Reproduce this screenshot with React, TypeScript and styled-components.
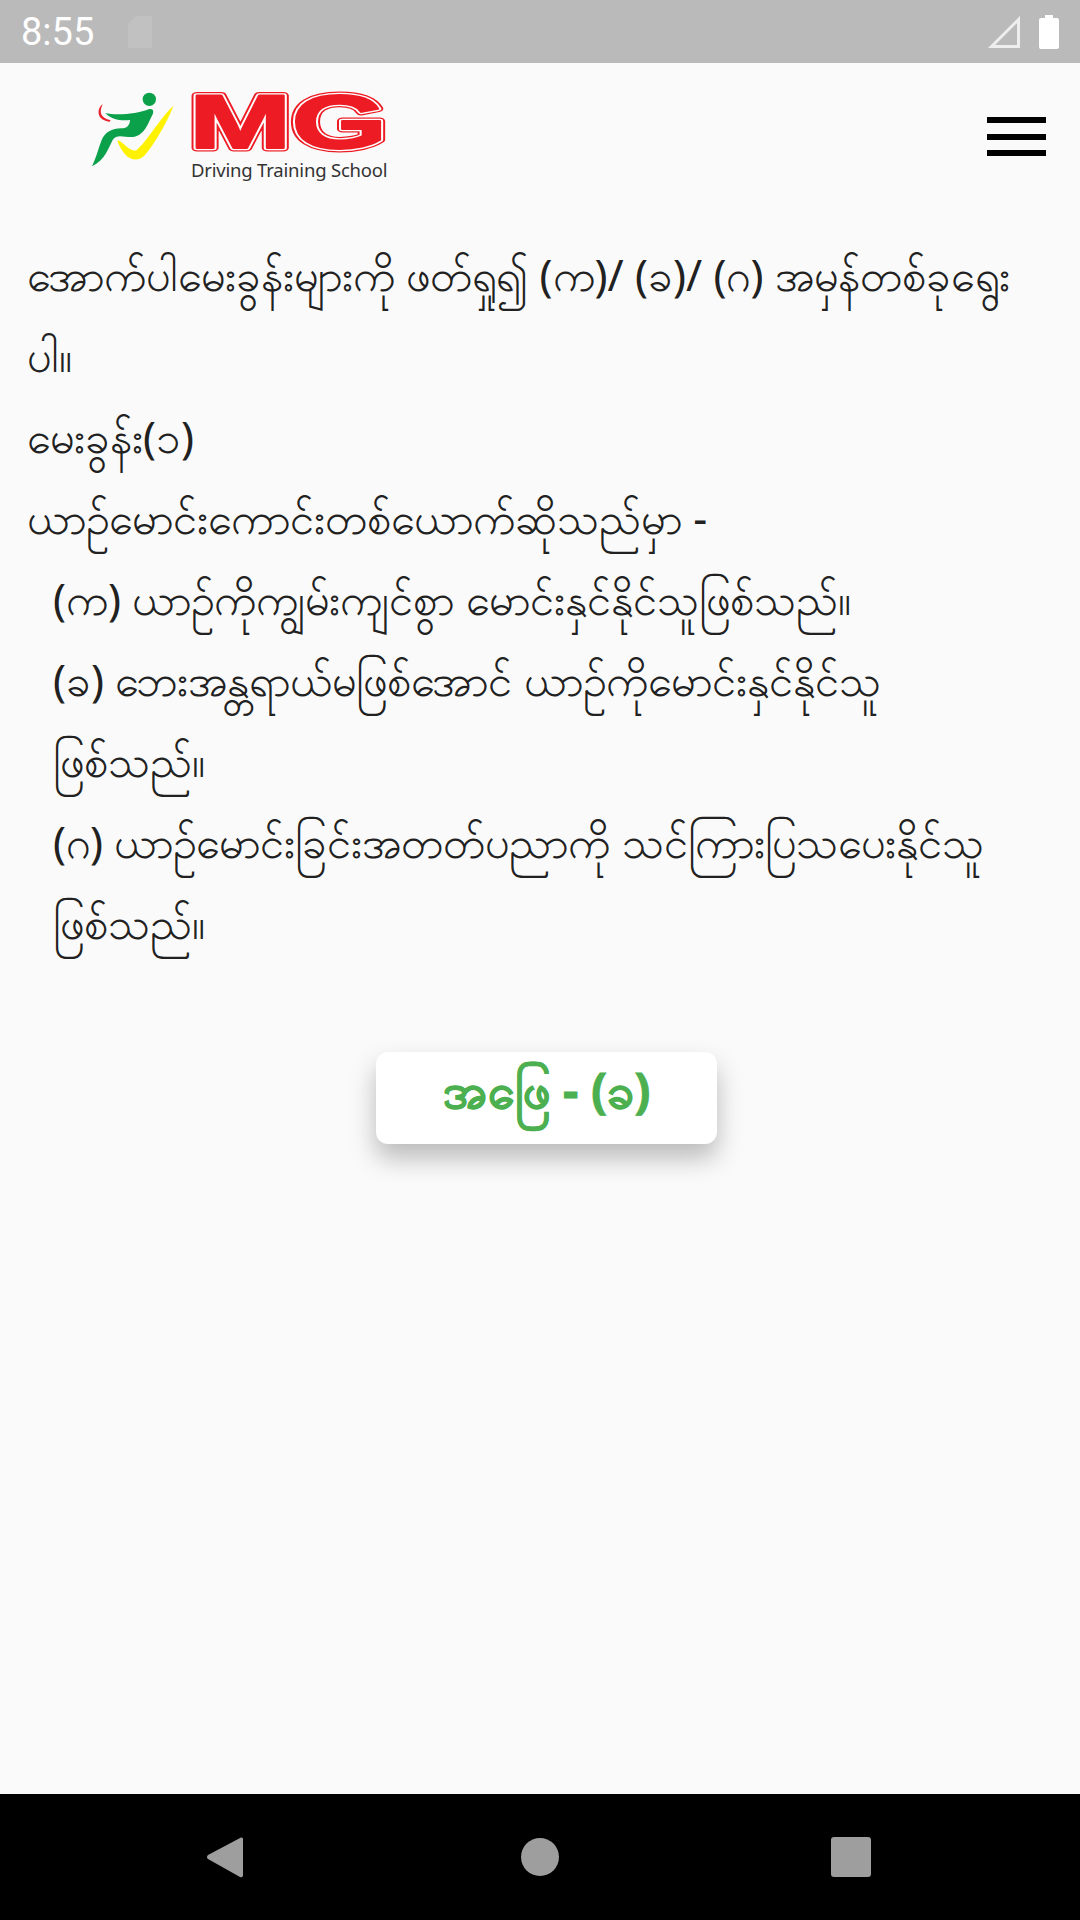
import styled, { createGlobalStyle } from "styled-components";

const Global = createGlobalStyle`
  html, body { margin: 0; padding: 0; background: #fafafa; }
`;

const Screen = styled.div`
  width: 1080px;
  height: 1920px;
  display: flex;
  flex-direction: column;
  background: #fafafa;
  overflow: hidden;
  font-family: "Noto Sans", sans-serif;
`;

const StatusBar = styled.div`
  height: 63px;
  flex-shrink: 0;
  background: #bababa;
  display: flex;
  align-items: center;
  padding: 0 21px;
  color: #fff;
`;

const Clock = styled.span`
  font: 400 38px Roboto, sans-serif;
  width: 107px;
`;

const StatusRight = styled.div`
  margin-left: auto;
  display: flex;
  align-items: center;
  gap: 19px;
`;

const Header = styled.header`
  height: 157px;
  flex-shrink: 0;
  display: flex;
  align-items: flex-start;
  justify-content: space-between;
  padding: 22px 34px 0 80px;
  box-sizing: border-box;
`;

const Logo = styled.div`
  display: flex;
  align-items: flex-start;
`;

const Brand = styled.div`
  display: flex;
  flex-direction: column;
  margin-top: 5px;
  margin-left: -1px;
`;

const Wordmark = styled.svg`
  display: block;
  overflow: visible;
`;

const Tagline = styled.span`
  font: 18.5px/22px "Noto Sans", sans-serif;
  letter-spacing: -0.2px;
  color: #333;
  white-space: nowrap;
  margin: 7px 0 0 2px;
`;

const Hamburger = styled.div`
  display: flex;
  flex-direction: column;
  gap: 10.5px;
  margin-top: 32px;
`;

const HamburgerBar = styled.span`
  display: block;
  width: 59px;
  height: 6px;
  background: #000;
`;

const Body = styled.main`
  flex: 1;
  padding: 14px 27px 0;
  color: #212121;
  font-size: 43.4px;
`;

const Line = styled.div<{ $indent?: boolean }>`
  height: 81px;
  line-height: 81px;
  white-space: nowrap;
  padding-left: ${(p) => (p.$indent ? "26px" : "0")};
`;

const AnswerButton = styled.button`
  display: block;
  width: 341px;
  height: 92px;
  margin: 89px 0 0 349px;
  padding: 0 0 9px;
  border: 0;
  border-radius: 12px;
  background: #fff;
  color: #4caf50;
  font: bold 48px "Noto Sans", sans-serif;
  -webkit-text-stroke: 0.8px #4caf50;
  box-shadow: 0 14px 26px rgba(0, 0, 0, 0.26);
`;

const NavBar = styled.nav`
  height: 126px;
  flex-shrink: 0;
  background: #000;
  display: flex;
  align-items: center;
  padding: 0 209px 0 207px;
  justify-content: space-between;
`;

const NavCircle = styled.span`
  width: 38px;
  height: 38px;
  margin-left: 6px;
  border-radius: 50%;
  background: #9e9e9e;
`;

const NavSquare = styled.span`
  width: 40px;
  height: 40px;
  border-radius: 3px;
  background: #9e9e9e;
`;

const LogoMark = () => (
  <svg width={110} height={90} viewBox="0 0 330 270">
    <path
      fill="#e8212b"
      d="M68 58C50 70 48 105 88 110C92 108 92 106 90 105C65 100 55 85 68 58Z"
    />
    <circle cx={208} cy={43} r={20} fill="#0ba14b" />
    <path
      fill="#0ba14b"
      d="M76 84C105 92 170 88 208 72C222 70 222 82 216 92C205 112 195 150 160 156C135 158 110 145 98 165C85 190 75 225 36 244C50 215 55 190 65 165C75 140 100 128 130 130C148 128 150 110 150 105C125 108 95 105 76 84Z"
    />
    <path
      fill="#fff200"
      d="M112 166C125 165 150 205 170 195C200 170 240 100 280 62C265 105 225 175 195 210C175 232 150 225 135 208C125 195 115 180 112 166Z"
    />
  </svg>
);

const BrandWord = () => (
  <Wordmark width={200} height={62} viewBox="0 0 200 62">
    <defs>
      <text
        id="mg"
        x={0}
        y={58}
        textLength={198}
        lengthAdjust="spacingAndGlyphs"
        fontFamily="'Liberation Sans', sans-serif"
        fontWeight={700}
        fontSize={76}
      >
        MG
      </text>
    </defs>
    <use href="#mg" fill="#ed1c24" stroke="#ed1c24" strokeWidth={7} strokeLinejoin="round" />
    <use href="#mg" fill="#fff" stroke="#fff" strokeWidth={4.5} strokeLinejoin="round" />
    <use href="#mg" fill="#ed1c24" stroke="#ed1c24" strokeWidth={2} strokeLinejoin="round" />
  </Wordmark>
);

export default function App() {
  return (
    <Screen>
      <Global />
      <StatusBar>
        <Clock>8:55</Clock>
        <svg width={24} height={32} viewBox="0 0 24 32">
          <path d="M8 0h14a2 2 0 0 1 2 2v28a2 2 0 0 1-2 2H2a2 2 0 0 1-2-2V8z" fill="#fff" opacity={0.1} />
        </svg>
        <StatusRight>
          <svg width={32} height={32} viewBox="0 0 32 32">
            <path d="M30.5 3.5V30.5H3.5Z" fill="none" stroke="#eee" strokeWidth={3} />
          </svg>
          <svg width={20} height={34} viewBox="0 0 20 34">
            <path d="M6 0h8v3h4a2 2 0 0 1 2 2v27a2 2 0 0 1-2 2H2a2 2 0 0 1-2-2V5a2 2 0 0 1 2-2h4z" fill="#fff" />
          </svg>
        </StatusRight>
      </StatusBar>
      <Header>
        <Logo>
          <LogoMark />
          <Brand>
            <BrandWord />
            <Tagline>Driving Training School</Tagline>
          </Brand>
        </Logo>
        <Hamburger>
          <HamburgerBar />
          <HamburgerBar />
          <HamburgerBar />
        </Hamburger>
      </Header>
      <Body>
        <Line>အောက်ပါမေးခွန်းများကို ဖတ်ရှု၍ (က)/ (ခ)/ (ဂ) အမှန်တစ်ခုရွေး</Line>
        <Line>ပါ။</Line>
        <Line>မေးခွန်း(၁)</Line>
        <Line>ယာဉ်မောင်းကောင်းတစ်ယောက်ဆိုသည်မှာ -</Line>
        <Line $indent>(က) ယာဉ်ကိုကျွမ်းကျင်စွာ မောင်းနှင်နိုင်သူဖြစ်သည်။</Line>
        <Line $indent>(ခ) ဘေးအန္တရာယ်မဖြစ်အောင် ယာဉ်ကိုမောင်းနှင်နိုင်သူ</Line>
        <Line $indent>ဖြစ်သည်။</Line>
        <Line $indent>(ဂ) ယာဉ်မောင်းခြင်းအတတ်ပညာကို သင်ကြားပြသပေးနိုင်သူ</Line>
        <Line $indent>ဖြစ်သည်။</Line>
        <AnswerButton>အဖြေ - (ခ)</AnswerButton>
      </Body>
      <NavBar>
        <svg width={36} height={42} viewBox="0 0 36 42">
          <path d="M34 1.5a2 2 0 0 1 2 1V39.5a2 2 0 0 1-3 1.5L1 23a2.5 2.5 0 0 1 0-4z" fill="#9e9e9e" />
        </svg>
        <NavCircle />
        <NavSquare />
      </NavBar>
    </Screen>
  );
}
